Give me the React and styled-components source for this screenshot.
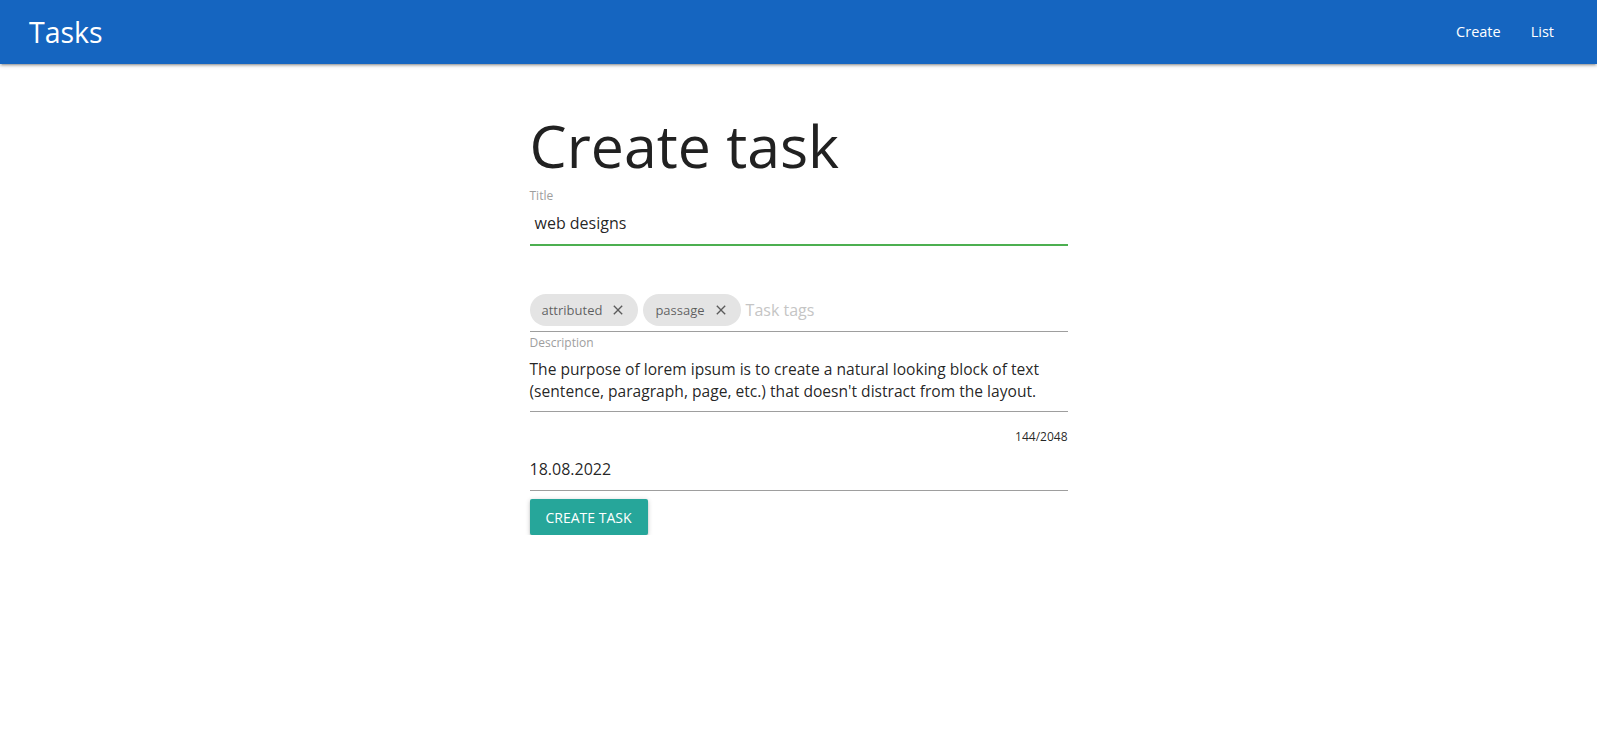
import React from 'react';
import styled, { createGlobalStyle } from 'styled-components';

const GlobalStyle = createGlobalStyle`
  html, body {
    margin: 0;
    padding: 0;
    background: #ffffff;
    font-family: "Open Sans", "Noto Sans", sans-serif;
    color: rgba(0, 0, 0, 0.87);
  }
`;

const Nav = styled.nav`
  height: 64px;
  background-color: #1565c0;
  box-shadow: 0 2px 2px 0 rgba(0, 0, 0, 0.14), 0 3px 1px -2px rgba(0, 0, 0, 0.12),
    0 1px 5px 0 rgba(0, 0, 0, 0.2);
  display: flex;
  align-items: center;
  justify-content: space-between;
  padding: 0 28px 0 29px;
  color: #fff;
`;

const Brand = styled.a`
  font-size: 28.5px;
  line-height: 64px;
  color: #fff;
  text-decoration: none;
`;

const NavLinks = styled.ul`
  display: flex;
  list-style: none;
  margin: 0;
  padding: 0;
`;

const NavLink = styled.a`
  display: block;
  padding: 0 15px;
  font-size: 14.5px;
  line-height: 64px;
  color: #fff;
  text-decoration: none;
`;

const Main = styled.main`
  width: 538px;
  margin: 0 auto;
  display: flex;
  flex-direction: column;
`;

const Heading = styled.h1`
  margin: 50px 0 0;
  font-size: 59px;
  line-height: 62px;
  font-weight: 400;
  color: #212121;
`;

const Label = styled.label`
  display: block;
  margin-top: ${p => p.$top || 0}px;
  font-size: 12px;
  line-height: 12px;
  color: #9e9e9e;
`;

const InputRow = styled.div`
  height: 42px;
  display: flex;
  align-items: center;
  margin-top: ${p => p.$top || 0}px;
  padding-left: ${p => p.$indent || 0}px;
  font-size: 16px;
  color: rgba(0, 0, 0, 0.87);
  border-bottom: 1px solid ${p => (p.$active ? '#4caf50' : '#9e9e9e')};
  box-shadow: ${p => (p.$active ? '0 1px 0 0 #4caf50' : 'none')};
`;

const Chips = styled.div`
  margin-top: 49px;
  display: flex;
  align-items: center;
  flex-wrap: wrap;
  border-bottom: 1px solid #9e9e9e;
`;

const Chip = styled.div`
  display: inline-flex;
  align-items: center;
  height: 32px;
  padding: 0 12px;
  margin: 0 5px 5px 0;
  border-radius: 16px;
  background-color: #e4e4e4;
  color: rgba(0, 0, 0, 0.6);
  font-size: 13px;
`;

const CloseIcon = styled.svg`
  width: 16px;
  height: 16px;
  margin-left: 8px;
  fill: rgba(0, 0, 0, 0.6);
`;

const Placeholder = styled.span`
  height: 32px;
  margin-bottom: 5px;
  line-height: 32px;
  font-size: 16px;
  color: #c5c5c5;
`;

const TextArea = styled.div`
  padding: 9px 0;
  font-size: 15.6px;
  line-height: 22px;
  color: rgba(0, 0, 0, 0.87);
  border-bottom: 1px solid #9e9e9e;
`;

const Counter = styled.div`
  margin-top: 19px;
  text-align: right;
  font-size: 12px;
  line-height: 12px;
  color: rgba(0, 0, 0, 0.87);
`;

const Button = styled.button`
  align-self: flex-start;
  margin-top: 8px;
  height: 36px;
  padding: 0 16px;
  border: none;
  border-radius: 2px;
  background-color: #26a69a;
  color: #fff;
  font-family: inherit;
  font-size: 14px;
  text-transform: uppercase;
  box-shadow: 0 2px 2px 0 rgba(0, 0, 0, 0.14), 0 3px 1px -2px rgba(0, 0, 0, 0.12),
    0 1px 5px 0 rgba(0, 0, 0, 0.2);
  cursor: pointer;
`;

const Close = () => (
  <CloseIcon viewBox="0 0 24 24">
    <path d="M19 6.41L17.59 5 12 10.59 6.41 5 5 6.41 10.59 12 5 17.59 6.41 19 12 13.41 17.59 19 19 17.59 13.41 12z" />
  </CloseIcon>
);

const tags = ['attributed', 'passage'];

const App = () => {
  return (
    <>
      <GlobalStyle />
      <Nav>
        <Brand href="#">Tasks</Brand>
        <NavLinks>
          <li><NavLink href="#">Create</NavLink></li>
          <li><NavLink href="#">List</NavLink></li>
        </NavLinks>
      </Nav>

      <Main>
        <Heading>Create task</Heading>

        <Label $top={14}>Title</Label>
        <InputRow $active $indent={5}>web designs</InputRow>

        <Chips>
          {tags.map(tag => (
            <Chip key={tag}>
              {tag}
              <Close />
            </Chip>
          ))}
          <Placeholder>Task tags</Placeholder>
        </Chips>

        <Label $top={5}>Description</Label>
        <TextArea>
          The purpose of lorem ipsum is to create a natural looking block of text
          (sentence, paragraph, page, etc.) that doesn't distract from the layout.
        </TextArea>
        <Counter>144/2048</Counter>

        <InputRow $top={5}>18.08.2022</InputRow>

        <Button>Create task</Button>
      </Main>
    </>
  );
};

export default App;
